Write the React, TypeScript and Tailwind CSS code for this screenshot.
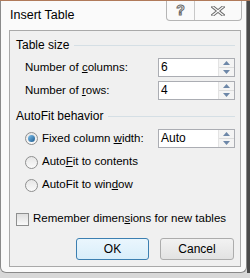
import React from "react";

const font = { fontFamily: '"Liberation Sans", Arial, sans-serif' };

function Spin({ value }: { value: string }) {
  return (
    <div className="flex h-[19px] w-[77px] border border-[#abadb3] bg-white">
      <div className="flex-1 pl-[2px] text-[12px] leading-[17px] text-black">{value}</div>
      <div className="flex w-[16px] flex-col border-l border-[#e3e3e3] bg-[#f4f4f4]">
        <div className="flex flex-1 items-center justify-center border-b border-[#dcdcdc]">
          <svg width="7" height="4" viewBox="0 0 7 4">
            <path d="M0 4 L3.5 0 L7 4 Z" fill="#6d87a8" />
          </svg>
        </div>
        <div className="flex flex-1 items-center justify-center">
          <svg width="7" height="4" viewBox="0 0 7 4">
            <path d="M0 0 L3.5 4 L7 0 Z" fill="#6d87a8" />
          </svg>
        </div>
      </div>
    </div>
  );
}

function Radio({ checked }: { checked?: boolean }) {
  return (
    <span className="flex h-[13px] w-[13px] shrink-0 items-center justify-center rounded-full border border-[#8e8f8f] bg-gradient-to-b from-[#e6e6e6] to-[#fafafa]">
      {checked && (
        <span className="h-[7px] w-[7px] rounded-full bg-gradient-to-br from-[#7fc3f0] to-[#1b5b8e]" />
      )}
    </span>
  );
}

function Group({ title }: { title: string }) {
  return (
    <div className="flex h-[16px] items-center gap-[5px] pl-[6px] pr-[5px]">
      <span className="text-[12px] leading-[16px] text-black">{title}</span>
      <span className="h-px flex-1 bg-[#d5dfe5]" />
    </div>
  );
}

export default function App() {
  return (
    <div className="flex h-[278px] w-[250px] flex-col overflow-hidden bg-[#d8d8d8] text-[11.5px]" style={font}>
      <div className="h-px bg-[#b07a5a]" />
      <div className="flex">
        <div className="relative h-[272px] w-[247px] rounded-b-[6px] border border-t-0 border-[#8a8a8a] bg-[#fafafa]">
          <div className="flex h-[29px] items-center pl-[9px] text-[12.5px] text-black">Insert Table</div>
          <div className="absolute right-[4px] top-0 flex h-[20px] rounded-b-[4px] border border-t-0 border-[#b5b5b5] bg-[#fafafa]">
            <div className="flex w-[28px] items-center justify-center border-r border-[#c8c8c8] text-[14px] font-bold text-white [-webkit-text-stroke:1px_#6a6a6a]">
              ?
            </div>
            <div className="flex w-[46px] items-center justify-center">
              <svg width="14" height="10" viewBox="0 0 14 10">
                <path d="M2 1 L7 5 L12 1 M2 9 L7 5 L12 9" stroke="#6a6a6a" strokeWidth="3.2" strokeLinecap="square" fill="none" />
                <path d="M2 1 L7 5 L12 1 M2 9 L7 5 L12 9" stroke="#fafafa" strokeWidth="1.3" strokeLinecap="square" fill="none" />
              </svg>
            </div>
          </div>
          <div className="ml-[8px] h-[237px] w-[232px] border border-[#a9a9a9] bg-[#f0f0f0] pt-[6px]">
            <Group title="Table size" />
            <div className="mt-[5px] flex items-center pl-[15px] pr-[5px]">
              <span className="flex-1 text-black">
                Number of <u>c</u>olumns:
              </span>
              <Spin value="6" />
            </div>
            <div className="mt-[4px] flex items-center pl-[15px] pr-[5px]">
              <span className="flex-1 text-black">
                Number of <u>r</u>ows:
              </span>
              <Spin value="4" />
            </div>
            <div className="mt-[8px]">
              <Group title="AutoFit behavior" />
            </div>
            <div className="mt-[5px] flex items-center pl-[15px] pr-[5px]">
              <Radio checked />
              <span className="ml-[4px] flex-1 text-black">
                Fixed column <u>w</u>idth:
              </span>
              <Spin value="Auto" />
            </div>
            <div className="mt-[5px] flex h-[18px] items-center pl-[15px]">
              <Radio />
              <span className="ml-[4px] text-black">
                Auto<u>F</u>it to contents
              </span>
            </div>
            <div className="mt-[5px] flex h-[18px] items-center pl-[15px]">
              <Radio />
              <span className="ml-[4px] text-black">
                AutoFit to win<u>d</u>ow
              </span>
            </div>
            <div className="mt-[16px] flex h-[18px] items-center pl-[6px]">
              <span className="h-[13px] w-[13px] shrink-0 border border-[#8e8f8f] bg-gradient-to-b from-[#dedede] to-[#fafafa]" />
              <span className="ml-[4px] whitespace-nowrap text-black">
                Remember dimen<u>s</u>ions for new tables
              </span>
            </div>
            <div className="mt-[10px] flex justify-end gap-[11px] pr-[6px]">
              <button className="h-[22px] w-[73px] rounded-[3px] border border-[#3c7fb1] bg-gradient-to-b from-[#eaf6fd] to-[#d9eefa] text-[12px] text-black">
                OK
              </button>
              <button className="h-[22px] w-[74px] rounded-[3px] border border-[#acacac] bg-gradient-to-b from-[#f2f2f2] to-[#e2e2e2] text-[12px] text-black">
                Cancel
              </button>
            </div>
          </div>
        </div>
        <div className="h-[272px] flex-1 bg-[#4a4a4a]" />
      </div>
    </div>
  );
}
